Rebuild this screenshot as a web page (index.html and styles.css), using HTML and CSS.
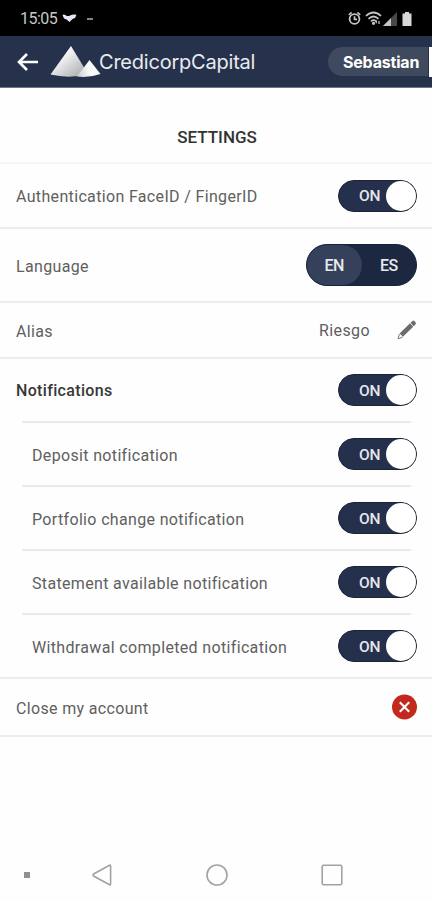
FILE: index.html
```html
<!DOCTYPE html>
<html lang="en">
<head>
    <meta charset="UTF-8">
    <meta name="viewport" content="width=device-width, initial-scale=1.0">
    <title>Settings</title>
    <link rel="stylesheet" href="styles.css">
</head>
<body>

    <div class="status-bar">
        <span class="status-time">15:05</span>
        <svg class="status-app" width="15" height="10" viewBox="0 0 15 10">
            <path d="M0.5 1Q2 0 4 1.5Q6 2.5 8 1.5Q11 0 14.5 0.8L13 4L10.5 5L7.5 8L4.5 5.5L2 4.5Z" fill="#e8e6f5"/>
        </svg>
        <span class="status-dash"></span>
        <div class="status-icons">
            <svg width="13" height="15" viewBox="0 0 13 15" fill="none" stroke="#c4c4c4">
                <circle cx="6.5" cy="8" r="4.9" stroke-width="1.8"/>
                <path d="M6.5 5.3V8.3H9M0.8 3.8L3.6 1.3M12.2 3.8L9.4 1.3" stroke-width="1.7"/>
            </svg>
            <svg width="17" height="15" viewBox="0 0 17 15" fill="none" stroke="#c4c4c4" stroke-width="1.7">
                <path d="M1 5Q8.5 -2 16 5M3.5 7.8Q8.5 3.2 13.5 7.8M6 10.3Q8.5 8 11 10.3"/>
                <circle cx="8.5" cy="12.3" r="0.8" fill="#c4c4c4"/>
                <path d="M11.3 12.3V9.5M14 10V13" stroke-width="1.3"/>
            </svg>
            <svg class="signal" width="14" height="14" viewBox="0 0 14 14">
                <path d="M14 0V14H0Z" fill="#484848"/>
                <path d="M8 6V14H0Z" fill="#c4c4c4"/>
            </svg>
            <svg class="battery" width="10" height="14" viewBox="0 0 10 14">
                <path d="M3 0H7V1.5H9.5V14H0.5V1.5H3Z" fill="#d8d8d8"/>
            </svg>
        </div>
    </div>

    <header class="header">
        <svg class="back-arrow" width="22" height="20" viewBox="0 0 22 20">
            <path d="M10 2L2 10L10 18M2 10H21" fill="none" stroke="#fff" stroke-width="2.6"/>
        </svg>
        <svg class="logo" width="51" height="33" viewBox="0 0 51 33">
            <defs>
                <linearGradient id="peak" x1="0" y1="0" x2="1" y2="1">
                    <stop offset="0.3" stop-color="#f8f8f8"/>
                    <stop offset="0.8" stop-color="#b9babd"/>
                </linearGradient>
                <linearGradient id="hill" x1="0" y1="0.6" x2="1" y2="0.4">
                    <stop offset="0" stop-color="#d2d3d5"/>
                    <stop offset="0.5" stop-color="#fafafa"/>
                </linearGradient>
            </defs>
            <path d="M21 1L38 29Q20 34 0.5 29.5Z" fill="url(#peak)"/>
            <path d="M39.5 15L50.5 29Q39 33 27 31.5Z" fill="url(#hill)"/>
        </svg>
        <span class="brand">CredicorpCapital</span>
        <div class="user">Sebastian</div>
        <span class="header-edge"></span>
    </header>

    <main>
        <h1 class="title">SETTINGS</h1>

        <div class="row row-auth">
            <span class="label">Authentication FaceID / FingerID</span>
            <div class="toggle"><span>ON</span><i class="knob"></i></div>
        </div>

        <div class="row row-language">
            <span class="label">Language</span>
            <div class="language">
                <span class="lang active">EN</span>
                <span class="lang">ES</span>
            </div>
        </div>

        <div class="row row-alias">
            <span class="label">Alias</span>
            <span class="alias-value">Riesgo</span>
            <svg class="pencil" width="20" height="20" viewBox="0 0 20 20">
                <path d="M13.5 2.8L15.6 0.9Q16.5 0.2 17.4 1.1L18.6 2.4Q19.4 3.3 18.6 4.2L16.6 6.2ZM13 3.3L16.2 6.7L5.9 16.8L2.6 13.6Z" fill="#6b6b6b"/>
                <path d="M2.4 14L1 18.9L5.6 17.2" fill="none" stroke="#6b6b6b" stroke-width="0.9"/>
            </svg>
        </div>

        <div class="row row-notifications">
            <span class="label strong">Notifications</span>
            <div class="toggle"><span>ON</span><i class="knob"></i></div>
        </div>

        <div class="sub-list">
            <div class="sub-row">
                <span class="label">Deposit notification</span>
                <div class="toggle"><span>ON</span><i class="knob"></i></div>
            </div>
            <div class="sub-row">
                <span class="label">Portfolio change notification</span>
                <div class="toggle"><span>ON</span><i class="knob"></i></div>
            </div>
            <div class="sub-row">
                <span class="label">Statement available notification</span>
                <div class="toggle"><span>ON</span><i class="knob"></i></div>
            </div>
            <div class="sub-row">
                <span class="label">Withdrawal completed notification</span>
                <div class="toggle"><span>ON</span><i class="knob"></i></div>
            </div>
        </div>

        <div class="row row-close">
            <span class="label">Close my account</span>
            <svg class="close-icon" width="26" height="26" viewBox="0 0 26 26">
                <circle cx="13.5" cy="13" r="12.5" fill="#c3281f"/>
                <path d="M8.8 8.3L18.2 17.7M18.2 8.3L8.8 17.7" stroke="#fff" stroke-width="2.1"/>
            </svg>
        </div>
    </main>

    <nav class="nav-bar">
        <span class="nav-dot"></span>
        <svg class="nav-back" width="20" height="22" viewBox="0 0 20 22">
            <path d="M17.5 1.2Q18.6 0.8 18.6 2V20Q18.6 21.2 17.5 20.8L1.6 12Q0.4 11 1.6 10Z" fill="none" stroke="#a2a2a2" stroke-width="1.6"/>
        </svg>
        <svg class="nav-home" width="22" height="22" viewBox="0 0 22 22">
            <circle cx="11" cy="11" r="10" fill="none" stroke="#a2a2a2" stroke-width="1.6"/>
        </svg>
        <svg class="nav-recent" width="22" height="22" viewBox="0 0 22 22">
            <rect x="1.2" y="1.2" width="19.6" height="19.6" rx="1.5" fill="none" stroke="#a2a2a2" stroke-width="1.6"/>
        </svg>
    </nav>

</body>
</html>
```

FILE: styles.css
```css
* {
    box-sizing: border-box;
}

body {
    font-family: Roboto, 'Liberation Sans', sans-serif;
    font-size: 16px;
    color: #606060;
    background-color: #fefefe;
    margin: 0;
    height: 900px;
    display: flex;
    flex-direction: column;
    overflow: hidden;
}

svg {
    display: block;
    flex-shrink: 0;
}

/* Status bar */
.status-bar {
    height: 36px;
    padding: 1px 20px 0;
    display: flex;
    align-items: center;
    background-color: #000;
}

.status-time {
    width: 42px;
    font-size: 16px;
    letter-spacing: -0.5px;
    color: #c8c8c8;
}

.status-dash {
    width: 6px;
    height: 2px;
    margin-left: 10px;
    background-color: #858585;
}

.status-icons {
    display: flex;
    align-items: center;
    gap: 4px;
    margin-left: auto;
}

.signal {
    margin-left: -3px;
}

.battery {
    margin-left: 1px;
}

/* Header */
.header {
    height: 52px;
    display: flex;
    align-items: center;
    padding-left: 17px;
    background-color: #26324c;
    border-bottom: 1px solid #6e7688;
}

.logo {
    margin-left: 11px;
}

.brand {
    font-family: Inter, sans-serif;
    font-size: 20px;
    letter-spacing: -0.22px;
    color: #e9ebef;
    margin-left: -2px;
}

.user {
    width: 100px;
    height: 29px;
    margin-left: auto;
    padding-left: 15px;
    line-height: 31px;
    border-radius: 15px 0 0 15px;
    background-color: #3f4a5e;
    font-family: Inter, sans-serif;
    font-size: 16px;
    letter-spacing: -0.2px;
    font-weight: 700;
    color: #fff;
}

.header-edge {
    width: 3px;
    height: 30px;
    margin-left: 1px;
    background-color: #fff;
}

/* Settings list */
.title {
    height: 76px;
    margin: 0;
    padding-top: 23px;
    border-bottom: 2px solid #f5f5f5;
    text-align: center;
    line-height: 52px;
    font-size: 17px;
    font-weight: 500;
    color: #333;
    padding-left: 2px;
}

.row,
.sub-row {
    display: flex;
    align-items: center;
    justify-content: space-between;
}

.row {
    padding: 0 15px 0 16px;
    border-bottom: 2px solid #ededed;
}

.row-auth {
    height: 65px;
}

.row-language {
    height: 74px;
}

.row-alias {
    height: 56px;
}

.row-notifications {
    height: 62px;
    border-bottom: none;
}

.row-close {
    height: 58px;
}

.label {
    padding-top: 2px;
    letter-spacing: 0.34px;
}

.strong {
    padding-top: 1px;
    color: #383838;
    font-weight: 500;
}

.toggle {
    width: 79px;
    height: 32px;
    display: flex;
    align-items: center;
    justify-content: flex-end;
    border-radius: 16px;
    background-color: #25314c;
    border: 1px solid #1c2333;
    color: #e6e8ed;
    font-weight: 500;
    font-size: 15.5px;
    letter-spacing: -0.4px;
}

.toggle span {
    padding-top: 1px;
}

.knob {
    width: 30px;
    height: 30px;
    margin-left: 6px;
    border-radius: 50%;
    background-color: #fff;
}

.language {
    width: 111px;
    height: 42px;
    display: flex;
    border-radius: 21px;
    border: 1px solid #15233e;
    background-color: #1c2840;
    overflow: hidden;
}

.lang {
    flex: 1;
    text-align: center;
    line-height: 42px;
    font-size: 16px;
    letter-spacing: -0.5px;
    font-weight: 500;
    color: #e6e8ed;
}

.active {
    border-radius: 21px;
    background-color: #35415a;
}

.alias-value {
    margin-left: auto;
    padding-top: 1px;
    letter-spacing: 0.4px;
}

.pencil {
    margin-left: 27px;
}

.sub-list {
    border-bottom: 2px solid #ededed;
}

.sub-row {
    height: 64px;
    margin: 0 21px 0 22px;
    border-top: 2px solid #e9e9e9;
    padding-left: 10px;
}

.sub-row .toggle {
    margin-right: -6px;
}

/* Navigation bar */
.nav-bar {
    height: 50px;
    margin-top: auto;
    padding-left: 24px;
    display: flex;
    align-items: center;
}

.nav-dot {
    width: 6px;
    height: 6px;
    background-color: #909090;
}

.nav-back {
    margin-left: 62px;
}

.nav-home {
    margin-left: 94px;
}

.nav-recent {
    margin-left: 93px;
}
```
